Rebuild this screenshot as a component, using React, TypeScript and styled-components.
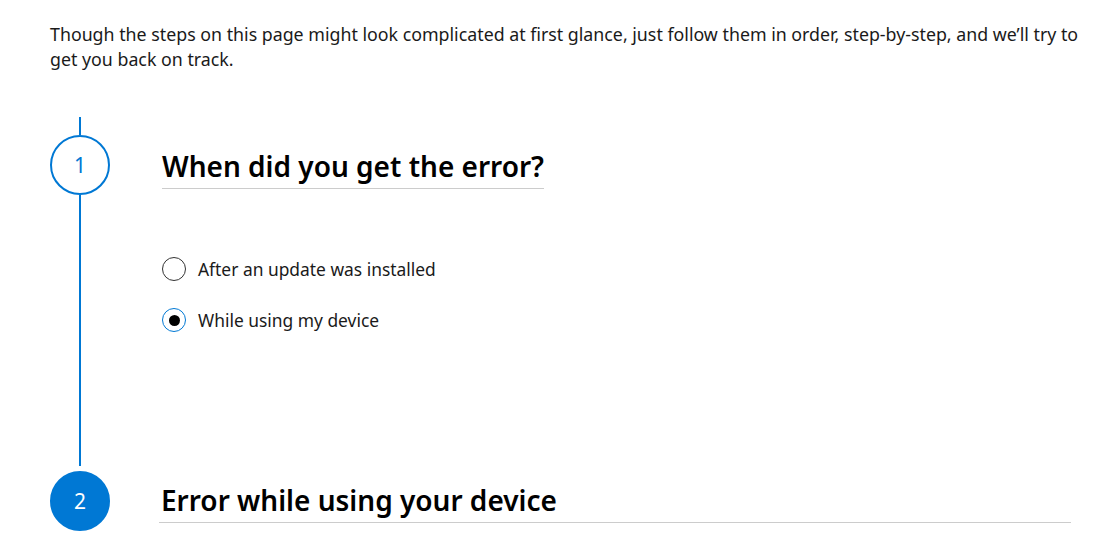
import styled, { createGlobalStyle } from 'styled-components';

const GlobalStyle = createGlobalStyle`
  html, body {
    margin: 0;
    padding: 0;
    background: #ffffff;
  }
  body {
    font-family: 'Noto Sans', 'Open Sans', sans-serif;
    color: #000000;
  }
`;

const Page = styled.div`
  width: 1112px;
  height: 560px;
  overflow: hidden;
  padding: 22px 28px 0 50px;
  box-sizing: border-box;
`;

const Intro = styled.p`
  margin: 0;
  font-size: 17.8px;
  line-height: 25px;
  color: #1a1a1a;
`;

const Steps = styled.div`
  margin-top: 45px;
  margin-right: 13px;
  display: flex;
  flex-direction: column;
`;

const Step = styled.div<{ $minHeight?: number }>`
  display: grid;
  grid-template-columns: 60px 1fr;
  column-gap: 52px;
  min-height: ${({ $minHeight }) => ($minHeight ? `${$minHeight}px` : 'auto')};
`;

const Rail = styled.div<{ $offset?: number }>`
  display: flex;
  flex-direction: column;
  align-items: center;
  padding-top: ${({ $offset }) => $offset ?? 0}px;
`;

const Line = styled.div<{ $height?: number }>`
  width: 2px;
  background: #0078d4;
  ${({ $height }) => ($height !== undefined ? `height: ${$height}px;` : 'flex: 1;')}
`;

const Badge = styled.div<{ $filled?: boolean }>`
  width: 60px;
  height: 60px;
  flex: none;
  box-sizing: border-box;
  border-radius: 50%;
  border: 2px solid #0078d4;
  background: ${({ $filled }) => ($filled ? '#0078d4' : '#ffffff')};
  color: ${({ $filled }) => ($filled ? '#ffffff' : '#0078d4')};
  display: flex;
  align-items: center;
  justify-content: center;
  font-size: 21px;
  font-weight: 400;
`;

const Body = styled.div<{ $top: number }>`
  padding-top: ${({ $top }) => $top}px;
  display: flex;
  flex-direction: column;
  align-items: flex-start;
`;

const Heading = styled.h2<{ $full?: boolean }>`
  margin: 0;
  font-size: 28px;
  font-weight: 600;
  line-height: 36px;
  padding-bottom: 4px;
  border-bottom: 1px solid #cccccc;
  align-self: ${({ $full }) => ($full ? 'stretch' : 'flex-start')};
  margin-left: ${({ $full }) => ($full ? '-3px' : '0')};
  padding-left: ${({ $full }) => ($full ? '2px' : '0')};
`;

const Options = styled.div`
  margin-top: 68px;
  display: flex;
  flex-direction: column;
  gap: 27px;
`;

const Option = styled.label`
  display: flex;
  align-items: center;
  gap: 12px;
  font-size: 17.4px;
  line-height: 24px;
  color: #1a1a1a;
  cursor: pointer;
`;

const RadioMark = styled.span<{ $checked?: boolean }>`
  width: 24px;
  height: 24px;
  box-sizing: border-box;
  border-radius: 50%;
  border: 1.5px solid ${({ $checked }) => ($checked ? '#0078d4' : '#333333')};
  display: flex;
  align-items: center;
  justify-content: center;
  flex: none;

  &::after {
    content: '';
    width: 11px;
    height: 11px;
    border-radius: 50%;
    background: #000000;
    display: ${({ $checked }) => ($checked ? 'block' : 'none')};
  }
`;

const options = [
  { label: 'After an update was installed', checked: false },
  { label: 'While using my device', checked: true },
];

export default function App() {
  return (
    <>
      <GlobalStyle />
      <Page>
        <Intro>
          Though the steps on this page might look complicated at first glance, just follow them in order,
          step-by-step, and we’ll try to get you back on track.
        </Intro>
        <Steps>
          <Step $minHeight={349}>
            <Rail>
              <Line $height={18} />
              <Badge>1</Badge>
              <Line />
            </Rail>
            <Body $top={31}>
              <Heading>When did you get the error?</Heading>
              <Options>
                {options.map((o) => (
                  <Option key={o.label}>
                    <RadioMark $checked={o.checked} />
                    {o.label}
                  </Option>
                ))}
              </Options>
            </Body>
          </Step>
          <Step>
            <Rail $offset={5}>
              <Badge $filled>2</Badge>
            </Rail>
            <Body $top={16}>
              <Heading $full>Error while using your device</Heading>
            </Body>
          </Step>
        </Steps>
      </Page>
    </>
  );
}
